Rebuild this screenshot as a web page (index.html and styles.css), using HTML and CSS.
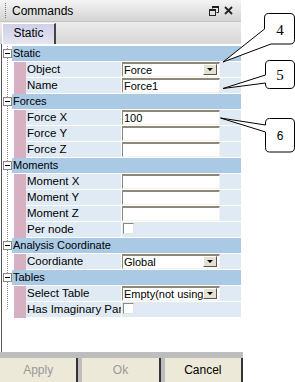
FILE: index.html
```html
<!DOCTYPE html>
<html lang="en">
<head>
    <meta charset="UTF-8">
    <meta name="viewport" content="width=device-width, initial-scale=1.0">
    <title>Commands</title>
    <link rel="stylesheet" href="styles.css">
</head>
<body>
    <div class="panel">
        <div class="titlebar">
            <span class="grip"></span>
            <span class="title">Commands</span>
            <span class="tb-icons">
                <svg width="10" height="10" viewBox="0 0 10 10">
                    <path d="M3.5 0.5h6v6h-2M3.5 0.5v2" fill="none" stroke="#222" stroke-width="1"/>
                    <rect x="3" y="0" width="7" height="2" fill="#222"/>
                    <rect x="0.5" y="3.5" width="6" height="6" fill="none" stroke="#222" stroke-width="1"/>
                    <rect x="0" y="3" width="7" height="2" fill="#222"/>
                </svg>
                <svg width="9" height="9" viewBox="0 0 9 9">
                    <path d="M1 1L8 8M8 1L1 8" stroke="#222" stroke-width="1.8"/>
                </svg>
            </span>
        </div>
        <div class="tabstrip">
            <div class="tab">Static</div>
        </div>
        <div class="grid">
            <div class="cat"><span class="tree"><span class="toggle"></span></span><span class="cat-name">Static</span></div>
            <div class="prop"><span class="tree"></span><span class="mark"></span><span class="name">Object</span><span class="value"><span class="combo"><span class="combo-text">Force</span><span class="drop"></span></span></span></div>
            <div class="prop"><span class="tree"></span><span class="mark"></span><span class="name">Name</span><span class="value"><span class="field">Force1</span></span></div>

            <div class="cat"><span class="tree"><span class="toggle"></span></span><span class="cat-name">Forces</span></div>
            <div class="prop"><span class="tree"></span><span class="mark"></span><span class="name">Force X</span><span class="value"><span class="field">100</span></span></div>
            <div class="prop"><span class="tree"></span><span class="mark"></span><span class="name">Force Y</span><span class="value"><span class="field"></span></span></div>
            <div class="prop"><span class="tree"></span><span class="mark"></span><span class="name">Force Z</span><span class="value"><span class="field"></span></span></div>

            <div class="cat"><span class="tree"><span class="toggle"></span></span><span class="cat-name">Moments</span></div>
            <div class="prop"><span class="tree"></span><span class="mark"></span><span class="name">Moment X</span><span class="value"><span class="field"></span></span></div>
            <div class="prop"><span class="tree"></span><span class="mark"></span><span class="name">Moment Y</span><span class="value"><span class="field"></span></span></div>
            <div class="prop"><span class="tree"></span><span class="mark"></span><span class="name">Moment Z</span><span class="value"><span class="field"></span></span></div>
            <div class="prop"><span class="tree"></span><span class="mark"></span><span class="name">Per node</span><span class="value"><span class="check"></span></span></div>

            <div class="cat"><span class="tree"><span class="toggle"></span></span><span class="cat-name">Analysis Coordinate</span></div>
            <div class="prop"><span class="tree"></span><span class="mark"></span><span class="name">Coordiante</span><span class="value"><span class="combo"><span class="combo-text">Global</span><span class="drop"></span></span></span></div>

            <div class="cat"><span class="tree"><span class="toggle"></span></span><span class="cat-name">Tables</span></div>
            <div class="prop"><span class="tree"></span><span class="mark"></span><span class="name">Select Table</span><span class="value"><span class="combo"><span class="combo-text">Empty(not using)</span><span class="drop"></span></span></span></div>
            <div class="prop last"><span class="tree"></span><span class="mark"></span><span class="name">Has Imaginary Part</span><span class="value"><span class="check"></span></span></div>
        </div>
        <div class="buttons">
            <div class="btn disabled">Apply</div>
            <div class="btn disabled">Ok</div>
            <div class="btn">Cancel</div>
        </div>
    </div>

    <!-- callout balloons -->
    <svg class="callouts" width="295" height="382" viewBox="0 0 295 382">
        <path d="M268.5 13.5H290Q294.5 13.5 294.5 18V39.5Q294.5 44 290 44H271L223 62L264.5 29V18Q264.5 13.5 268.5 13.5Z" fill="#fff" stroke="#000" stroke-width="1"/>
        <text x="280" y="35" class="num">4</text>
        <path d="M269.5 60.5H290Q294.5 60.5 294.5 65V84Q294.5 88.5 290 88.5H269.5Q265.5 88.5 265.5 84V83L223 88.5L265.5 75V65Q265.5 60.5 269.5 60.5Z" fill="#fff" stroke="#000" stroke-width="1"/>
        <text x="280" y="80" class="num">5</text>
        <path d="M269.5 118.5H290Q294.5 118.5 294.5 123V147.5Q294.5 152 290 152H269.5Q265.5 152 265.5 147.5V132L220.5 118L265.5 125V123Q265.5 118.5 269.5 118.5Z" fill="#fff" stroke="#000" stroke-width="1"/>
        <text x="280" y="140" class="num sans">6</text>
    </svg>
</body>
</html>
```

FILE: styles.css
```css
/* Base */
body {
    margin: 0;
    background-color: #fff;
    font-family: "Liberation Sans", Arial, sans-serif;
    font-size: 11px;
    color: #000;
}

.panel {
    width: 243px;
    height: 382px;
    display: flex;
    flex-direction: column;
}

/* Title bar */
.titlebar {
    height: 21px;
    width: 241px;
    display: flex;
    align-items: center;
    background: linear-gradient(#f4f4f4, #d4d4d4);
    font-size: 12px;
}

.grip {
    width: 1px;
    height: 15px;
    margin: 0 6px 0 5px;
    background: repeating-linear-gradient(#777 0 1px, transparent 1px 2px);
}

.title {
    flex: 1;
}

.tb-icons {
    display: flex;
    align-items: center;
    gap: 5px;
    margin-right: 8px;
}

/* Tabs */
.tabstrip {
    height: 23px;
    width: 241px;
    background: linear-gradient(#ececec, #d6d6d6);
    border-top: 1px solid #c4c4c4;
    box-sizing: border-box;
    display: flex;
    align-items: flex-end;
}

.tab {
    width: 54px;
    height: 21px;
    margin-left: 2px;
    box-sizing: border-box;
    background: linear-gradient(#cfd0e6, #e4e4f2);
    border-left: 1px solid #fff;
    border-top: 1px solid #fff;
    border-right: 2px solid #444;
    text-align: center;
    line-height: 19px;
    font-size: 12px;
}

/* Property grid */
.grid {
    height: 308px;
    width: 240px;
    margin-left: 1px;
    padding-top: 2px;
    box-sizing: border-box;
    border-left: 1px solid #555;
    background-color: #fff;
}

.cat, .prop {
    display: grid;
    height: 16px;
}

.cat {
    grid-template-columns: 10px 229px;
}

.prop {
    grid-template-columns: 12px 12px 95px 120px;
}

.tree {
    position: relative;
    background: repeating-linear-gradient(#8a8a8a 0 1px, transparent 1px 2px) 5px 0 / 1px 100% no-repeat;
}

.prop.last .tree {
    background-size: 1px 8px;
}

.toggle {
    position: absolute;
    left: 1px;
    top: 3px;
    width: 9px;
    height: 9px;
    box-sizing: border-box;
    border: 1px solid #888;
    background-color: #fff;
}

.toggle::after {
    content: "";
    position: absolute;
    left: 1px;
    top: 3px;
    width: 5px;
    height: 1px;
    background-color: #000;
}

.cat-name {
    background-color: #a9c9e4;
    border-bottom: 1px solid #fff;
    padding-left: 1px;
    line-height: 15px;
    white-space: nowrap;
}

.mark {
    background-color: #d8b0c4;
}

.name {
    background-color: #dfeaf5;
    border-bottom: 1px solid #fff;
    padding-left: 1px;
    line-height: 15px;
    font-size: 11.5px;
    white-space: nowrap;
    overflow: hidden;
}

.value {
    background-color: #dfeaf5;
    border-bottom: 1px solid #fff;
    border-left: 1px solid #fff;
    display: flex;
    align-items: flex-start;
}

.field, .combo {
    width: 98px;
    height: 15px;
    box-sizing: border-box;
    background-color: #fff;
    border-top: 2px solid #8c887a;
    border-left: 1px solid #8c887a;
    border-right: 1px solid #f4f2ea;
    border-bottom: 1px solid #f4f2ea;
    padding-left: 1px;
    line-height: 12px;
    white-space: nowrap;
    overflow: hidden;
}

.combo {
    display: flex;
    justify-content: space-between;
}

.combo-text {
    overflow: hidden;
}

.drop {
    flex: none;
    position: relative;
    width: 14px;
    height: 11px;
    box-sizing: border-box;
    margin-right: 2px;
    background-color: #e6e2d2;
    border-top: 1px solid #fff;
    border-left: 1px solid #fff;
    border-right: 1px solid #555;
    border-bottom: 1px solid #555;
}

.drop::after {
    content: "";
    position: absolute;
    left: 3px;
    top: 3px;
    border-left: 3px solid transparent;
    border-right: 3px solid transparent;
    border-top: 3px solid #000;
}

.check {
    width: 11px;
    height: 11px;
    margin: 1px 0 0 1px;
    box-sizing: border-box;
    background-color: #fff;
    border-top: 1px solid #8c887a;
    border-left: 1px solid #8c887a;
    border-right: 1px solid #e8e6dc;
    border-bottom: 1px solid #e8e6dc;
}

/* Buttons */
.buttons {
    height: 30px;
    width: 243px;
    box-sizing: border-box;
    background-color: #bdbdbd;
    padding-top: 6px;
    display: flex;
    gap: 4px;
}

.btn {
    flex: 1;
    background-color: #ece9d8;
    border-right: 2px solid #333;
    text-align: center;
    line-height: 24px;
    font-size: 12px;
}

.btn.disabled {
    color: #9a9a9a;
}

/* Callouts */
.callouts {
    position: absolute;
    left: 0;
    top: 0;
    pointer-events: none;
}

.num {
    font-family: "Liberation Serif", serif;
    font-size: 15px;
    text-anchor: middle;
}

.num.sans {
    font-family: "Liberation Sans", sans-serif;
    font-size: 12px;
}
```
